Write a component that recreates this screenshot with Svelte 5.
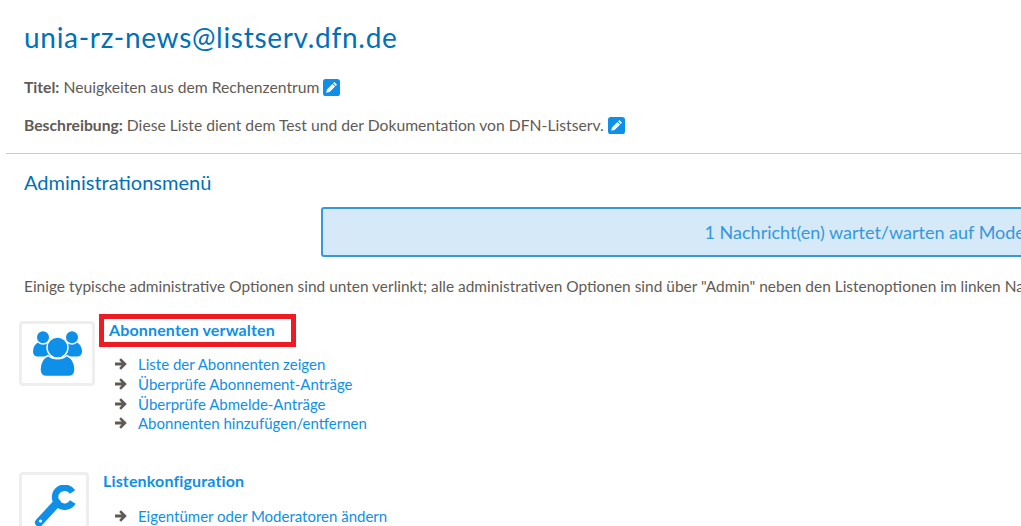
<script>
  const sections = [
    {
      title: 'Abonnenten verwalten',
      marked: true,
      links: [
        'Liste der Abonnenten zeigen',
        'Überprüfe Abonnement-Anträge',
        'Überprüfe Abmelde-Anträge',
        'Abonnenten hinzufügen/entfernen'
      ]
    },
    {
      title: 'Listenkonfiguration',
      marked: false,
      links: ['Eigentümer oder Moderatoren ändern']
    }
  ];
</script>

{#snippet edit()}
  <svg class="edit" viewBox="0 0 18 18" aria-hidden="true">
    <rect width="18" height="18" rx="3" fill="#0e8fe8" />
    <path d="M12 3.200l2.800 2.800-1.300 1.300-2.800-2.800zM10 5.200l2.800 2.800-5.800 5.800-3.600.8.800-3.600z" fill="#fff" />
  </svg>
{/snippet}

<div class="page">
  <header class="top">
    <h1>unia-rz-news@listserv.dfn.de</h1>
    <p class="meta"><b>Titel:</b> Neuigkeiten aus dem Rechenzentrum {@render edit()}</p>
    <p class="meta"><b>Beschreibung:</b> Diese Liste dient dem Test und der Dokumentation von DFN-Listserv. {@render edit()}</p>
  </header>

  <main class="admin">
    <h2>Administrationsmenü</h2>
    <div class="notice">1 Nachricht(en) wartet/warten auf Moderation</div>
    <p class="hint">Einige typische administrative Optionen sind unten verlinkt; alle administrativen Optionen sind über "Admin" neben den Listenoptionen im linken Navigationsmenü erreichbar.</p>

    {#each sections as s, i}
      <section class="group">
        <div class="tile">
          {#if i === 0}
            <svg viewBox="0 0 49 45" width="49" height="45" aria-hidden="true">
              <g fill="#0e8fe8">
                <circle cx="10" cy="6.200" r="6" />
                <circle cx="39" cy="6.200" r="6" />
                <path d="M5 11.500c3 3 7 3 10 0 3 1 4 3 4 5v9H5c-3 0-5-2-5-5 0-4 2-7.500 5-9z" />
                <path d="M44 11.500c-3 3-7 3-10 0-3 1-4 3-4 5v9h14c3 0 5-2 5-5 0-4-2-7.500-5-9z" />
              </g>
              <g fill="#0e8fe8" stroke="#fff" stroke-width="1.400">
                <circle cx="24.500" cy="16.500" r="10.500" />
                <path d="M15 24.500c5.500 4.500 13.500 4.500 19 0 5 2.500 8 8 8 14 0 4-2.500 7-6.500 7h-22c-4 0-6.500-3-6.500-7 0-6 3-11.500 8-14z" />
              </g>
            </svg>
          {:else}
            <svg viewBox="-1 0 44 44" width="44" height="44" aria-hidden="true">
              <path d="M39.500 7A9.500 9.500 0 1 0 39.800 17" fill="none" stroke="#0e8fe8" stroke-width="6.500" />
              <path d="M24 18L6 37.500" fill="none" stroke="#0e8fe8" stroke-width="8" stroke-linecap="round" />
              <circle cx="7.500" cy="36" r="1.600" fill="#fff" />
            </svg>
          {/if}
        </div>
        <div class="body">
          <h3 class:marked={s.marked}>{s.title}</h3>
          <ul>
            {#each s.links as link}
              <li>
                <svg class="arrow" viewBox="0 0 13 12" aria-hidden="true">
                  <path d="M0 4.400h6.500L4.200 2.100 6 .3 11.800 6 6 11.700 4.200 9.900l2.300-2.300H0z" fill="#5f5a55" />
                </svg>
                <a href="#top">{link}</a>
              </li>
            {/each}
          </ul>
        </div>
      </section>
    {/each}
  </main>
</div>

<style>
  :global(body) {
    margin: 0;
    background: #fff;
    overflow: hidden;
  }
  .page {
    width: 1500px;
    height: 526px;
    overflow: hidden;
    font-family: Lato, "Open Sans", sans-serif;
    font-size: 15.700px;
    color: #5f5a55;
    box-sizing: border-box;
    padding-left: 6px;
  }
  .top {
    padding: 20px 0 8px 18px;
    border-bottom: 1px solid #ccc;
    height: 125px;
  }
  h1 {
    margin: 0 0 24px;
    font-size: 28px;
    line-height: 34px;
    font-weight: 400;
    color: #0070b8;
    letter-spacing: 0.7px;
  }
  .meta {
    margin: 0 0 20px;
    line-height: 18px;
    display: flex;
    align-items: center;
    white-space: pre-wrap;
  }
  .meta b { font-weight: 700; }
  .edit {
    width: 17px;
    height: 17px;
  }
  .admin { padding-left: 18px; }
  h2 {
    margin: 16px 0 13px;
    font-size: 20px;
    line-height: 24px;
    font-weight: 400;
    color: #0070b8;
  }
  .notice {
    margin-left: 297px;
    width: 1134px;
    height: 50px;
    box-sizing: border-box;
    border: 2px solid #3498db;
    border-radius: 3px;
    background: #d6e9f8;
    color: #3498db;
    font-size: 18px;
    line-height: 46px;
    text-align: center;
  }
  .hint {
    margin: 19px 0 0;
    line-height: 20px;
    white-space: nowrap;
    font-size: 15.450px;
  }
  .group {
    display: flex;
    align-items: flex-start;
    margin: 24px 0 0 -5px;
    height: 134px;
  }
  .group + .group { margin-top: 18px; }
  .tile {
    width: 76px;
    height: 65px;
    margin-top: 1px;
    box-sizing: border-box;
    border: 3px solid #eee;
    border-radius: 4px;
    display: flex;
    align-items: center;
    justify-content: center;
    flex-shrink: 0;
  }
  .group + .group .tile {
    width: 70px;
    height: 70px;
    margin-top: 0;
  }
  .body { padding-left: 14px; }
  .group:first-of-type .body { padding-left: 4px; }
  h3 {
    margin: -1px 0 15px;
    font-size: 16px;
    line-height: 20px;
    font-weight: 700;
    color: #0e8fe8;
    letter-spacing: 0.15px;
  }
  h3.marked {
    border: 5px solid #ed1c24;
    padding: 0 16px 1px 5px;
    line-height: 22px;
    margin: -6px 0 7.500px;
    width: fit-content;
  }
  ul {
    margin: 0;
    padding: 0 0 0 12px;
    list-style: none;
  }
  .group:first-of-type ul { padding-left: 16px; }
  li {
    display: flex;
    align-items: center;
    gap: 10px;
    height: 19.700px;
    font-size: 15px;
  }
  .arrow {
    width: 13px;
    height: 12px;
    flex-shrink: 0;
  }
  a {
    color: #0e8fe8;
    text-decoration: none;
  }
</style>
